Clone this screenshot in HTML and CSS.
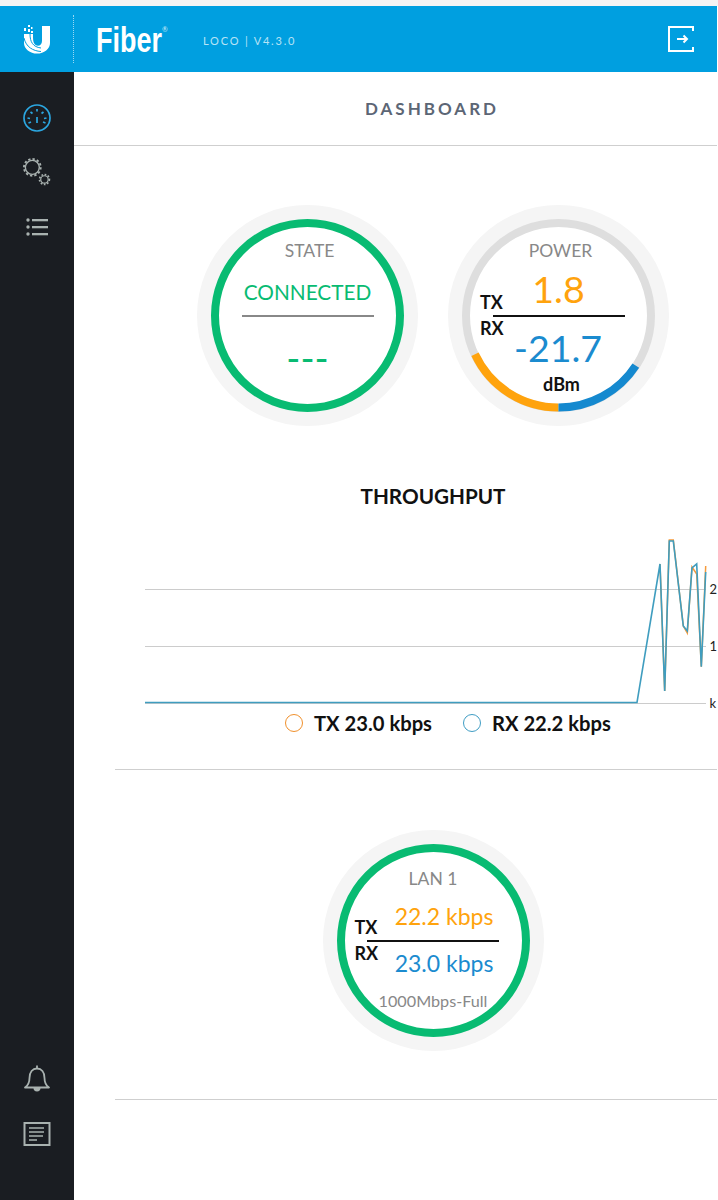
FILE: index.html
```html
<!DOCTYPE html>
<html lang="en">
<head>
    <meta charset="UTF-8">
    <meta name="viewport" content="width=device-width, initial-scale=1.0">
    <title>Fiber - Dashboard</title>
    <link rel="stylesheet" href="styles.css">
</head>
<body>

    <header class="topbar">
        <div class="logo-cell">
            <svg class="logo" width="28" height="30" viewBox="0 0 28 30">
                <path d="M1 10V19A13 10.500 0 0 0 27 19V2H19V17C19 22 14 23 11.500 20 10 18 10 15 10 10Z" fill="#fff"/>
                <path d="M1 14C3 23 10 27 18 27.500" fill="none" stroke="#009fe0" stroke-width="1"/>
                <path d="M7 10C7 18 10 23 18 24" fill="none" stroke="#009fe0" stroke-width="1"/>
                <rect x="1" y="4" width="2" height="3" fill="#fff"/>
                <rect x="5" y="1" width="2" height="2" fill="#fff"/>
                <rect x="5" y="5" width="2" height="3" fill="#fff"/>
                <rect x="8" y="7" width="2" height="2" fill="#fff"/>
                <rect x="8" y="3" width="1.500" height="2" fill="#fff"/>
            </svg>
        </div>
        <div class="brand">
            <span class="brand-name">Fiber</span><span class="brand-mark">®</span>
        </div>
        <div class="version">LOCO | V4.3.0</div>
        <svg class="logout" width="28" height="28" viewBox="0 0 28 28" fill="none" stroke="#fff" stroke-width="2">
            <path d="M26 6V2H2v24h24v-4"/>
            <path d="M10 14h10M16.500 10.500L20 14l-3.500 3.500"/>
        </svg>
    </header>

    <div class="app">
        <nav class="sidebar">
            <svg class="nav-icon nav-dash" width="30" height="30" viewBox="0 0 30 30" fill="none" stroke="#2ba6e0" stroke-width="1.700">
                <circle cx="15" cy="15" r="13"/>
                <path d="M15 6v2.500M15 14v6M8.500 9l2 1.500M21.500 9l-2 1.500M5.500 15l2.500 .5M24.500 15l-2.500 .5M6.500 20l2.500-1M23.500 20l-2.500-1"/>
            </svg>
            <svg class="nav-icon nav-gears" width="28" height="28" viewBox="0 0 30 30" fill="none" stroke="#a9b2b0">
                <circle cx="10" cy="10" r="7.500" stroke-width="1.500"/>
                <circle cx="10" cy="10" r="9" stroke-width="2" stroke-dasharray="2.500 2.200"/>
                <circle cx="23" cy="23" r="4" stroke-width="1.300"/>
                <circle cx="23" cy="23" r="5.300" stroke-width="1.800" stroke-dasharray="1.800 1.700"/>
            </svg>
            <svg class="nav-icon nav-list" width="24" height="20" viewBox="0 0 24 20" fill="#a9b2b0">
                <circle cx="3" cy="3" r="1.700"/>
                <circle cx="3" cy="10" r="1.700"/>
                <circle cx="3" cy="17" r="1.700"/>
                <rect x="7" y="2" width="16" height="2.300"/>
                <rect x="7" y="9" width="16" height="2.300"/>
                <rect x="7" y="16" width="16" height="2.300"/>
            </svg>
            <div class="nav-spacer"></div>
            <svg class="nav-icon nav-bell" width="28" height="30" viewBox="0 0 28 30" fill="none" stroke="#a9b2b0" stroke-width="1.800">
                <path d="M2 24.500c3-2 4.500-5 4.500-9.500 0-6 3-9.500 7.500-9.500s7.500 3.500 7.500 9.500c0 4.500 1.500 7.500 4.500 9.500z" stroke-linejoin="round"/>
                <path d="M14 5.500V2.500"/>
                <path d="M10.500 25a3.500 3.500 0 0 0 7 0z" fill="#a9b2b0" stroke="none"/>
            </svg>
            <svg class="nav-icon nav-log" width="28" height="24" viewBox="0 0 28 24" fill="none" stroke="#a9b2b0">
                <rect x="1.500" y="1" width="25" height="22" stroke-width="2"/>
                <path d="M6 6h15M6 10h15M6 14h14M6 18h8" stroke-width="1.600"/>
            </svg>
        </nav>

        <main class="main">
            <h1 class="page-title">DASHBOARD</h1>

            <div class="content">
                <section class="gauges">
                    <div class="gauge">
                        <div class="ring ring-green">
                            <div class="ring-top">
                                <div class="ring-label">STATE</div>
                                <div class="state-value">CONNECTED</div>
                            </div>
                            <div class="ring-rule rule-grey"></div>
                            <div class="state-dash">---</div>
                        </div>
                    </div>

                    <div class="gauge">
                        <div class="ring ring-grey">
                            <div class="ring-top">
                                <div class="ring-label">POWER</div>
                                <div class="power-value tx-color">1.8</div>
                            </div>
                            <div class="ring-rule"></div>
                            <div class="power-value power-rx rx-color">-21.7</div>
                            <div class="power-unit">dBm</div>
                        </div>
                        <span class="side-label label-tx">TX</span>
                        <span class="side-label label-rx">RX</span>
                        <svg class="ring-arcs" width="221" height="221" viewBox="0 0 221 221" fill="none" stroke-width="8">
                            <path d="M27 149.300A92 92 0 0 0 110.500 202.500" stroke="#ffa30d"/>
                            <path d="M110.500 202.500A92 92 0 0 0 187.800 160.600" stroke="#1589cf"/>
                        </svg>
                    </div>
                </section>

                <section class="throughput">
                    <h2 class="section-title">THROUGHPUT</h2>
                    <svg class="chart" width="602" height="180" viewBox="0 0 602 180" fill="none">
                        <path d="M30 59.500H591M30 116.500H591M30 173.500H591" stroke="#ccc" stroke-width="1.200"/>
                        <path d="M545 34L549.700 161 554.300 10H558.300L568.300 96 572.300 103 577 37 581.700 44 586.300 136.700 590.700 36" stroke="#f59a3c" stroke-width="1.500"/>
                        <path d="M30 172.500H522L545 34 549.700 161 554.300 11H558.300L568.300 96 572.300 101 577 38 581.700 34 586.300 136.700 590.700 42" stroke="#3f9dbf" stroke-width="1.600"/>
                        <text class="axis" x="594.500" y="64">2</text>
                        <text class="axis" x="594.500" y="121">1</text>
                        <text class="axis" x="594.500" y="178">k</text>
                    </svg>
                    <div class="legend">
                        <span class="legend-item"><i class="dot dot-tx"></i>TX 23.0 kbps</span>
                        <span class="legend-item"><i class="dot dot-rx"></i>RX 22.2 kbps</span>
                    </div>
                </section>

                <section class="lan">
                    <div class="gauge">
                        <div class="ring ring-green">
                            <div class="ring-top">
                                <div class="ring-label lan-label">LAN 1</div>
                                <div class="lan-value tx-color">22.2 kbps</div>
                            </div>
                            <div class="ring-rule"></div>
                            <div class="lan-value lan-rx rx-color">23.0 kbps</div>
                            <div class="lan-speed">1000Mbps-Full</div>
                        </div>
                        <span class="side-label label-tx">TX</span>
                        <span class="side-label label-rx">RX</span>
                    </div>
                </section>
            </div>
        </main>
    </div>

</body>
</html>
```

FILE: styles.css
```css
* { margin: 0; padding: 0; box-sizing: border-box; }

html, body { height: 1200px; overflow: hidden; }

body {
    font-family: 'Lato', sans-serif;
    padding: 6px 1px 0 0;
    background: linear-gradient(#f4f4f4 6px, #fff 6px);
}

/* --- TOP BAR --- */
.topbar {
    height: 66px;
    background: #009fe0;
    color: #fff;
    display: flex;
    align-items: center;
}

.logo-cell {
    width: 74px;
    height: 48px;
    border-right: 1px dotted rgba(255, 255, 255, 0.6);
    display: flex;
    align-items: center;
    justify-content: center;
}

.brand { margin-left: 22px; width: 107px; display: flex; align-items: flex-start; padding-top: 2px; }
.brand-name {
    font-family: 'Liberation Sans', sans-serif;
    font-size: 35px;
    font-weight: 700;
    line-height: 40px;
    display: inline-block;
    width: 66px;
    transform: scaleX(0.77);
    transform-origin: left center;
}
.brand-mark { font-size: 7px; margin-top: 5px; color: rgba(255, 255, 255, 0.8); }

.version { font-size: 11px; letter-spacing: 1.8px; color: rgba(255, 255, 255, 0.72); padding-top: 2px; }

.logout { margin-left: auto; margin-right: 22px; }

/* --- LAYOUT --- */
.app { display: flex; height: 1128px; }

.sidebar {
    flex: 0 0 74px;
    background: #1a1d22;
    display: flex;
    flex-direction: column;
    align-items: center;
    padding: 31px 0 54px;
}

.nav-icon { display: block; flex: none; }
.nav-gears { margin-top: 25px; }
.nav-list { margin-top: 31px; }
.nav-spacer { flex: 1; }
.nav-bell { margin-bottom: 29px; }

.main { flex: 1; min-width: 0; }

.page-title {
    height: 74px;
    line-height: 73px;
    padding-left: 73px;
    text-align: center;
    font-size: 17px;
    font-weight: 700;
    letter-spacing: 3px;
    color: #5c6675;
    border-bottom: 1.500px solid #cfcfcf;
}

.content { padding-left: 41px; }

/* --- GAUGES --- */
.gauges {
    display: flex;
    justify-content: center;
    gap: 30px;
    padding: 59px 0 0 34px;
}

.gauge {
    width: 221px;
    height: 221px;
    padding: 14px;
    border-radius: 50%;
    background: #f5f5f5;
    position: relative;
    flex: none;
}

.ring {
    width: 193px;
    height: 193px;
    border-radius: 50%;
    border: 8px solid #08bb72;
    background: #fff;
    display: flex;
    flex-direction: column;
    align-items: center;
    text-align: center;
}
.ring-grey { border-color: #dedede; }

.ring-top { height: 88px; width: 100%; padding-top: 14px; flex: none; }
.ring-label { font-size: 17.500px; line-height: 20px; color: #888; padding-left: 4px; }

.ring-rule { width: 132px; height: 1.500px; background: #111; flex: none; }
.rule-grey { background: #888; }

.state-value { font-size: 20.800px; line-height: 30px; margin-top: 16px; color: #08bb72; }
.state-dash { font-size: 38px; line-height: 40px; margin-top: 20px; color: #08bb72; }

.tx-color { color: #ffa30d; }
.rx-color { color: #1b8bcf; }

.power-value { font-size: 37.500px; line-height: 44px; margin-top: 6px; }
.power-rx { margin-top: 9px; padding-right: 1px; }
.power-unit { font-size: 18px; font-weight: 700; line-height: 18px; margin-top: 5px; padding-left: 6px; color: #111; }

.side-label {
    position: absolute;
    left: 32px;
    font-size: 18px;
    font-weight: 700;
    line-height: 18px;
    color: #111;
}
.label-tx { top: 88px; }
.label-rx { top: 114px; }

.ring-arcs { position: absolute; top: 0; left: 0; }

/* --- THROUGHPUT --- */
.throughput { border-bottom: 1.500px solid #cfcfcf; margin-top: 59px; }

.section-title {
    height: 22px;
    line-height: 22px;
    padding-left: 34px;
    text-align: center;
    font-size: 20.700px;
    font-weight: 700;
    color: #111;
}

.chart { display: block; margin-top: 23px; }
.axis { font-family: 'Lato', sans-serif; font-size: 13px; fill: #222; }

.legend {
    display: flex;
    gap: 31px;
    padding: 1px 0 0 170px;
    height: 59px;
}
.legend-item {
    display: flex;
    align-items: center;
    font-size: 20.200px;
    font-weight: 700;
    line-height: 24px;
    height: 24px;
    color: #111;
}
.dot { width: 18px; height: 18px; border-radius: 50%; border: 1.500px solid; margin-right: 11px; }
.dot-tx { border-color: #f0902c; }
.dot-rx { border-color: #3f9dc4; }

/* --- LAN --- */
.lan {
    display: flex;
    justify-content: center;
    padding: 60px 0 48px 34px;
    border-bottom: 1.500px solid #cfcfcf;
}

.lan-label { margin-top: 3px; padding-left: 0; }
.lan-value { font-size: 23px; line-height: 30px; margin-top: 12px; padding-left: 22px; }
.lan-rx { margin-top: 6px; }
.lan-speed { font-size: 16.200px; line-height: 20px; margin-top: 13px; color: #888; }
```
